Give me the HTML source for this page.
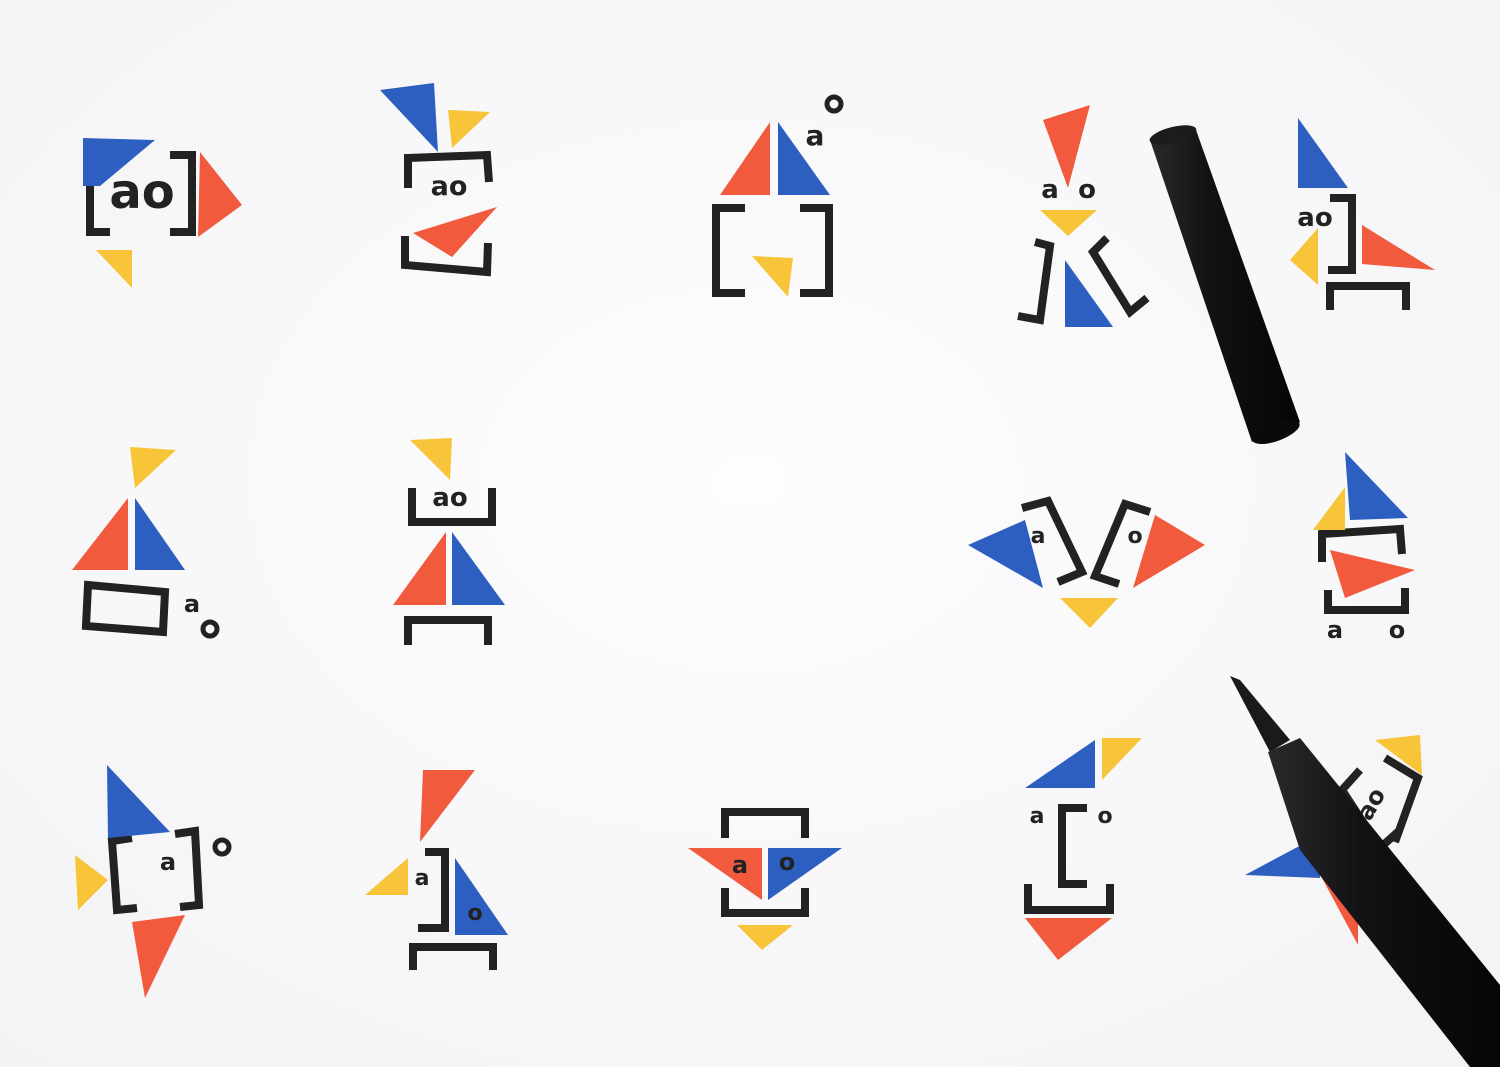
<!DOCTYPE html>
<html><head><meta charset="utf-8"><style>
html,body{margin:0;padding:0;background:#f9f9fa;}
svg{display:block}
text{font-family:"DejaVu Sans","Liberation Sans",sans-serif;font-weight:bold;fill:#222}
</style></head><body>
<svg width="1500" height="1067" viewBox="0 0 1500 1067" xmlns="http://www.w3.org/2000/svg">
<defs>
<radialGradient id="bg" cx="50%" cy="45%" r="75%"><stop offset="0" stop-color="#fdfdfe"/><stop offset="1" stop-color="#f3f3f5"/></radialGradient>
<linearGradient id="cap" x1="0" y1="0" x2="1" y2="0"><stop offset="0" stop-color="#2a2a2c"/><stop offset="0.4" stop-color="#121214"/><stop offset="1" stop-color="#050505"/></linearGradient>
</defs>
<rect width="1500" height="1067" fill="url(#bg)"/>
<g fill="none" stroke="#222" stroke-width="8" stroke-linejoin="miter">
<polyline points="110,155 90,155 90,232 110,232"/>
<polyline points="170,155 192,155 192,232 170,232"/>
<polyline points="408,188 408,158 487,155 489,182"/>
<polyline points="405,236 405,265 487,272 488,243"/>
<polyline points="745,208 716,208 716,293 745,293"/>
<polyline points="800,208 829,208 829,293 800,293"/>
<polyline points="1035,242 1050,246 1040,320 1018,316"/>
<polyline points="1107,238 1093,252 1130,312 1147,298"/>
<polyline points="1330,198 1352,198 1352,270 1328,270"/>
<polyline points="1330,310 1330,286 1406,286 1406,310"/>
<polygon points="88,585 165,592 163,632 86,626"/>
<polyline points="412,488 412,522 492,522 492,488"/>
<polyline points="408,645 408,620 488,620 488,645"/>
<polyline points="1022,508 1048,501 1082,572 1058,582"/>
<polyline points="1150,512 1125,504 1095,576 1119,584"/>
<polyline points="1322,562 1322,534 1400,529 1402,554"/>
<polyline points="1328,590 1328,610 1405,610 1405,588"/>
<polyline points="132,838 112,841 117,910 137,908"/>
<polyline points="175,834 195,831 199,905 180,907"/>
<polyline points="425,852 445,852 445,928 418,928"/>
<polyline points="413,970 413,947 493,947 493,970"/>
<polyline points="725,838 725,812 805,812 805,838"/>
<polyline points="725,888 725,913 805,913 805,888"/>
<polyline points="1087,808 1062,808 1062,884 1087,884"/>
<polyline points="1028,884 1028,910 1110,910 1110,884"/>
<polyline points="1360,770 1342,790 1380,848 1400,830"/>
<polyline points="1385,758 1418,778 1395,842"/>
<circle cx="834" cy="104" r="7" stroke-width="5"/>
<circle cx="210" cy="629" r="7" stroke-width="5"/>
<circle cx="222" cy="847" r="7" stroke-width="5"/>
</g>
<g fill="#f25a3e">
<polygon points="200,152 242,205 198,237"/>
<polygon points="413,233 497,207 452,257"/>
<polygon points="720,195 770,122 770,195"/>
<polygon points="1043,120 1090,105 1068,188"/>
<polygon points="1362,225 1362,264 1435,270"/>
<polygon points="72,570 128,498 128,570"/>
<polygon points="393,605 446,532 446,605"/>
<polygon points="1155,515 1205,545 1133,588"/>
<polygon points="1330,550 1415,570 1345,598"/>
<polygon points="132,922 185,915 145,998"/>
<polygon points="423,770 475,770 420,842"/>
<polygon points="688,848 762,848 762,900"/>
<polygon points="1025,918 1112,918 1058,960"/>
<polygon points="1322,878 1358,878 1358,945"/>
</g>
<g fill="#2d5fc0">
<polygon points="83,138 155,140 100,186 83,186"/>
<polygon points="380,90 434,83 438,152"/>
<polygon points="778,122 778,195 830,195"/>
<polygon points="1065,260 1065,327 1113,327"/>
<polygon points="1298,118 1298,188 1348,188"/>
<polygon points="135,498 135,570 185,570"/>
<polygon points="452,532 452,605 505,605"/>
<polygon points="968,545 1025,520 1043,588"/>
<polygon points="1345,452 1408,518 1350,520"/>
<polygon points="107,765 108,838 170,832"/>
<polygon points="455,858 455,935 508,935"/>
<polygon points="768,848 842,848 768,900"/>
<polygon points="1025,788 1095,740 1095,788"/>
<polygon points="1245,875 1320,835 1320,878"/>
</g>
<g fill="#f8c43a">
<polygon points="96,250 132,250 132,288"/>
<polygon points="448,110 490,112 452,148"/>
<polygon points="752,256 793,258 788,297"/>
<polygon points="1040,210 1097,210 1068,236"/>
<polygon points="1290,260 1318,228 1318,285"/>
<polygon points="130,447 176,450 135,488"/>
<polygon points="410,440 452,438 450,480"/>
<polygon points="1060,598 1118,598 1090,628"/>
<polygon points="1313,530 1345,487 1345,530"/>
<polygon points="75,855 108,880 78,910"/>
<polygon points="365,895 408,858 408,895"/>
<polygon points="737,925 793,925 762,950"/>
<polygon points="1102,738 1142,738 1102,780"/>
<polygon points="1375,740 1420,735 1422,775"/>
</g>
<text x="142" y="208" font-size="48" text-anchor="middle">ao</text>
<text x="449" y="195" font-size="27" text-anchor="middle">ao</text>
<text x="815" y="145" font-size="28" text-anchor="middle">a</text>
<text x="1050" y="198" font-size="26" text-anchor="middle">a</text>
<text x="1087" y="198" font-size="26" text-anchor="middle">o</text>
<text x="1315" y="226" font-size="26" text-anchor="middle">ao</text>
<text x="192" y="612" font-size="24" text-anchor="middle">a</text>
<text x="450" y="506" font-size="26" text-anchor="middle">ao</text>
<text x="1038" y="543" font-size="22" text-anchor="middle">a</text>
<text x="1135" y="543" font-size="22" text-anchor="middle">o</text>
<text x="1335" y="638" font-size="24" text-anchor="middle">a</text>
<text x="1397" y="638" font-size="24" text-anchor="middle">o</text>
<text x="168" y="870" font-size="24" text-anchor="middle">a</text>
<text x="422" y="885" font-size="22" text-anchor="middle">a</text>
<text x="475" y="920" font-size="22" text-anchor="middle">o</text>
<text x="740" y="873" font-size="24" text-anchor="middle">a</text>
<text x="787" y="870" font-size="24" text-anchor="middle">o</text>
<text x="1037" y="823" font-size="22" text-anchor="middle">a</text>
<text x="1105" y="823" font-size="22" text-anchor="middle">o</text>
<text x="1378" y="808" font-size="24" text-anchor="middle" transform="rotate(-60 1378 808)">ao</text>
<polygon points="1150,140 1196,130 1300,422 1252,442" fill="url(#cap)"/>
<ellipse cx="1173" cy="135" rx="24" ry="8" fill="#1c1c1e" transform="rotate(-14 1173 135)"/>
<ellipse cx="1276" cy="432" rx="25" ry="9" fill="#0a0a0a" transform="rotate(-20 1276 432)"/>
<polygon points="1230,676 1240,680 1290,740 1270,752" fill="#1a1a1a"/>
<polygon points="1268,752 1300,738 1500,985 1500,1067 1470,1067 1300,850" fill="url(#cap)"/>
</svg>
</body></html>
